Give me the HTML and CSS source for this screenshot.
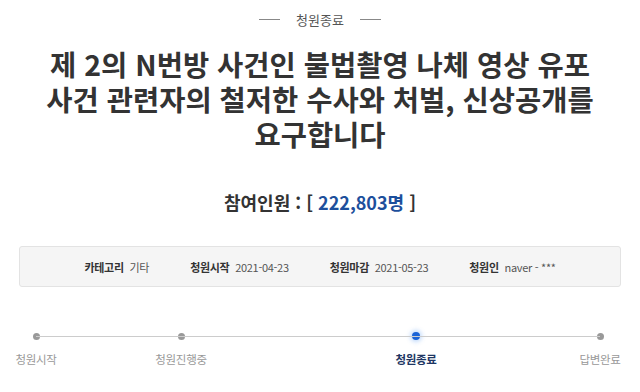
FILE: index.html
```html
<!DOCTYPE html>
<html lang="ko">

<head>
  <meta charset="UTF-8">
  <meta name="viewport" content="width=device-width, initial-scale=1.0">
  <title>청원종료</title>
  <link rel="stylesheet" href="styles.css">
</head>

<body>
  <div class="petition">
    <div class="status">
      <span class="dash"></span>
      <span class="status-text">청원종료</span>
      <span class="dash"></span>
    </div>

    <h1 class="title">
      <span class="title-line">제 2의 N번방 사건인 불법촬영 나체 영상 유포</span>
      <span class="title-line">사건 관련자의 철저한 수사와 처벌, 신상공개를</span>
      <span class="title-line">요구합니다</span>
    </h1>

    <p class="count">참여인원 : [ <span class="count-num">222,803명</span> ]</p>

    <ul class="info">
      <li><strong>카테고리</strong> 기타</li>
      <li><strong>청원시작</strong> 2021-04-23</li>
      <li><strong>청원마감</strong> 2021-05-23</li>
      <li><strong>청원인</strong> naver - ***</li>
    </ul>

    <div class="progress">
      <div class="progress-line"></div>
      <div class="step step-1">
        <span class="dot"></span>
        <span class="label">청원시작</span>
      </div>
      <div class="step step-2">
        <span class="dot"></span>
        <span class="label">청원진행중</span>
      </div>
      <div class="step step-3 active">
        <span class="dot"></span>
        <span class="label">청원종료</span>
      </div>
      <div class="step step-4">
        <span class="dot"></span>
        <span class="label">답변완료</span>
      </div>
    </div>
  </div>
</body>

</html>
```

FILE: styles.css
```css
body {
  margin: 0;
  background-color: #fff;
  font-family: "Noto Sans CJK KR", "Noto Sans", sans-serif;
  color: #333;
}

.petition {
  display: flex;
  flex-direction: column;
  align-items: center;
}

.status {
  display: flex;
  align-items: center;
  gap: 16px;
  margin-top: 9px;
  height: 20px;
}

.dash {
  width: 21px;
  height: 1px;
  background-color: #888;
}

.status-text {
  font-size: 13px;
  color: #555;
}

.title {
  margin: 17px 0 0;
  display: flex;
  flex-direction: column;
  align-items: center;
  font-size: 28.5px;
  font-weight: 700;
  letter-spacing: 0;
  color: #333;
}

.title-line {
  display: block;
  height: 35px;
  line-height: 35px;
}

.count {
  margin: 38px 0 0;
  font-size: 18px;
  font-weight: 700;
  color: #333;
}

.count-num {
  color: #1d4f9c;
}

.info {
  list-style: none;
  margin: 31px 0 0;
  padding: 0;
  width: 600px;
  height: 39px;
  display: flex;
  justify-content: center;
  align-items: center;
  gap: 41px;
  background-color: #f5f5f5;
  border: 1px solid #e3e3e3;
  border-radius: 3px;
  font-size: 11px;
  letter-spacing: -0.3px;
  color: #555;
}

.info strong {
  color: #333;
  margin-right: 3px;
}

.progress {
  position: relative;
  width: 640px;
  margin-top: 45px;
  display: flex;
}

.progress-line {
  position: absolute;
  left: 36px;
  right: 40px;
  top: 4px;
  height: 1px;
  background-color: #ccc;
}

.step {
  width: 72px;
  display: flex;
  flex-direction: column;
  align-items: center;
  gap: 11px;
}

.step-2 {
  margin-left: 73px;
}

.step-3 {
  margin-left: 163px;
}

.step-4 {
  margin-left: 112px;
}

.dot {
  width: 7px;
  height: 7px;
  margin-top: 1px;
  border-radius: 50%;
  background-color: #999;
}

.label {
  font-size: 11.5px;
  color: #999;
  letter-spacing: -0.3px;
}

.active .dot {
  width: 8px;
  height: 8px;
  margin-top: 0;
  background-color: #1a63d6;
  box-shadow: 0 0 4px 2px rgba(80, 150, 240, 0.35);
}

.active .label {
  font-weight: 700;
  color: #1e3663;
}
```
